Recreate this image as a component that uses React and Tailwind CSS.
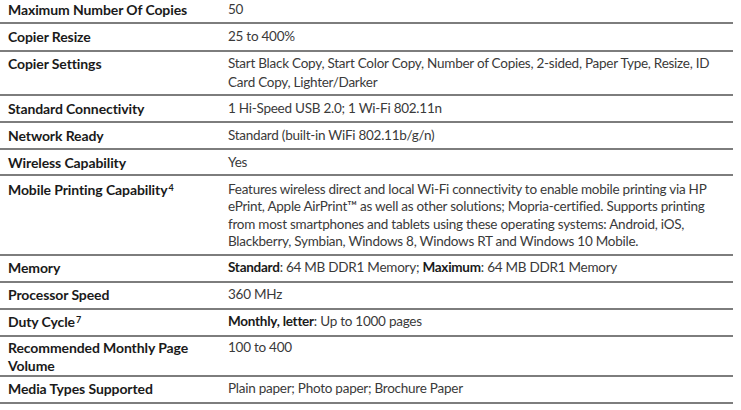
import React from 'react';

const single = 'pt-[3.5px] pb-[4px] leading-[17.5px]';

const rows = [
  { label: 'Maximum Number Of Copies', value: '50', pad: 'pt-[1px] pb-[3.5px] leading-[17.5px]' },
  { label: 'Copier Resize', value: '25 to 400%', pad: 'pt-[3.5px] pb-[5px] leading-[17.5px]' },
  {
    label: 'Copier Settings',
    value: 'Start Black Copy, Start Color Copy, Number of Copies, 2-sided, Paper Type, Resize, ID Card Copy, Lighter/Darker',
    pad: 'pt-[2px] pb-[2px] leading-[19px]',
  },
  { label: 'Standard Connectivity', value: '1 Hi-Speed USB 2.0; 1 Wi-Fi 802.11n', pad: single },
  { label: 'Network Ready', value: 'Standard (built-in WiFi 802.11b/g/n)', pad: single },
  { label: 'Wireless Capability', value: 'Yes', pad: 'pt-[3.5px] pb-[3px] leading-[17.5px]' },
  {
    label: 'Mobile Printing Capability',
    sup: '4',
    value:
      'Features wireless direct and local Wi-Fi connectivity to enable mobile printing via HP ePrint, Apple AirPrint™ as well as other solutions; Mopria-certified. Supports printing from most smartphones and tablets using these operating systems: Android, iOS, Blackberry, Symbian, Windows 8, Windows RT and Windows 10 Mobile.',
    pad: 'pt-[5px] pb-[3.8px] leading-[17.3px]',
  },
  {
    label: 'Memory',
    value: (
      <>
        <b className="font-bold text-[#1a1a1a]">Standard</b>: 64 MB DDR1 Memory;{' '}
        <b className="font-bold text-[#1a1a1a]">Maximum</b>: 64 MB DDR1 Memory
      </>
    ),
    pad: single,
  },
  { label: 'Processor Speed', value: '360 MHz', pad: single },
  {
    label: 'Duty Cycle',
    sup: '7',
    value: (
      <>
        <b className="font-bold text-[#1a1a1a]">Monthly, letter</b>: Up to 1000 pages
      </>
    ),
    pad: single,
  },
  {
    label: 'Recommended Monthly Page Volume',
    value: '100 to 400',
    pad: 'pt-[2.5px] pb-[0.5px] leading-[17.5px]',
  },
  { label: 'Media Types Supported', value: 'Plain paper; Photo paper; Brochure Paper', pad: single },
];

const SpecRow = ({ label, sup, value, pad }) => (
  <div className={`flex border-b-2 border-[#7d7d7d] ${pad}`}>
    <div className="w-[228px] shrink-0 pl-[8px] pr-3 text-[14px] font-bold tracking-[-0.1px] text-[#1a1a1a]">
      {label}
      {sup && <sup className="text-[9px] ml-[1px]">{sup}</sup>}
    </div>
    <div className="flex-1 pr-[14px] text-[13.5px] tracking-[-0.25px] text-[#3a3a3a]">{value}</div>
  </div>
);

export default function App() {
  return (
    <div className="w-[741px] h-[410px] bg-white overflow-hidden">
      <div className="w-[733px]" style={{ fontFamily: 'Lato, "Noto Sans", sans-serif' }}>
        {rows.map((r) => (
          <SpecRow key={r.label} {...r} />
        ))}
      </div>
    </div>
  );
}
